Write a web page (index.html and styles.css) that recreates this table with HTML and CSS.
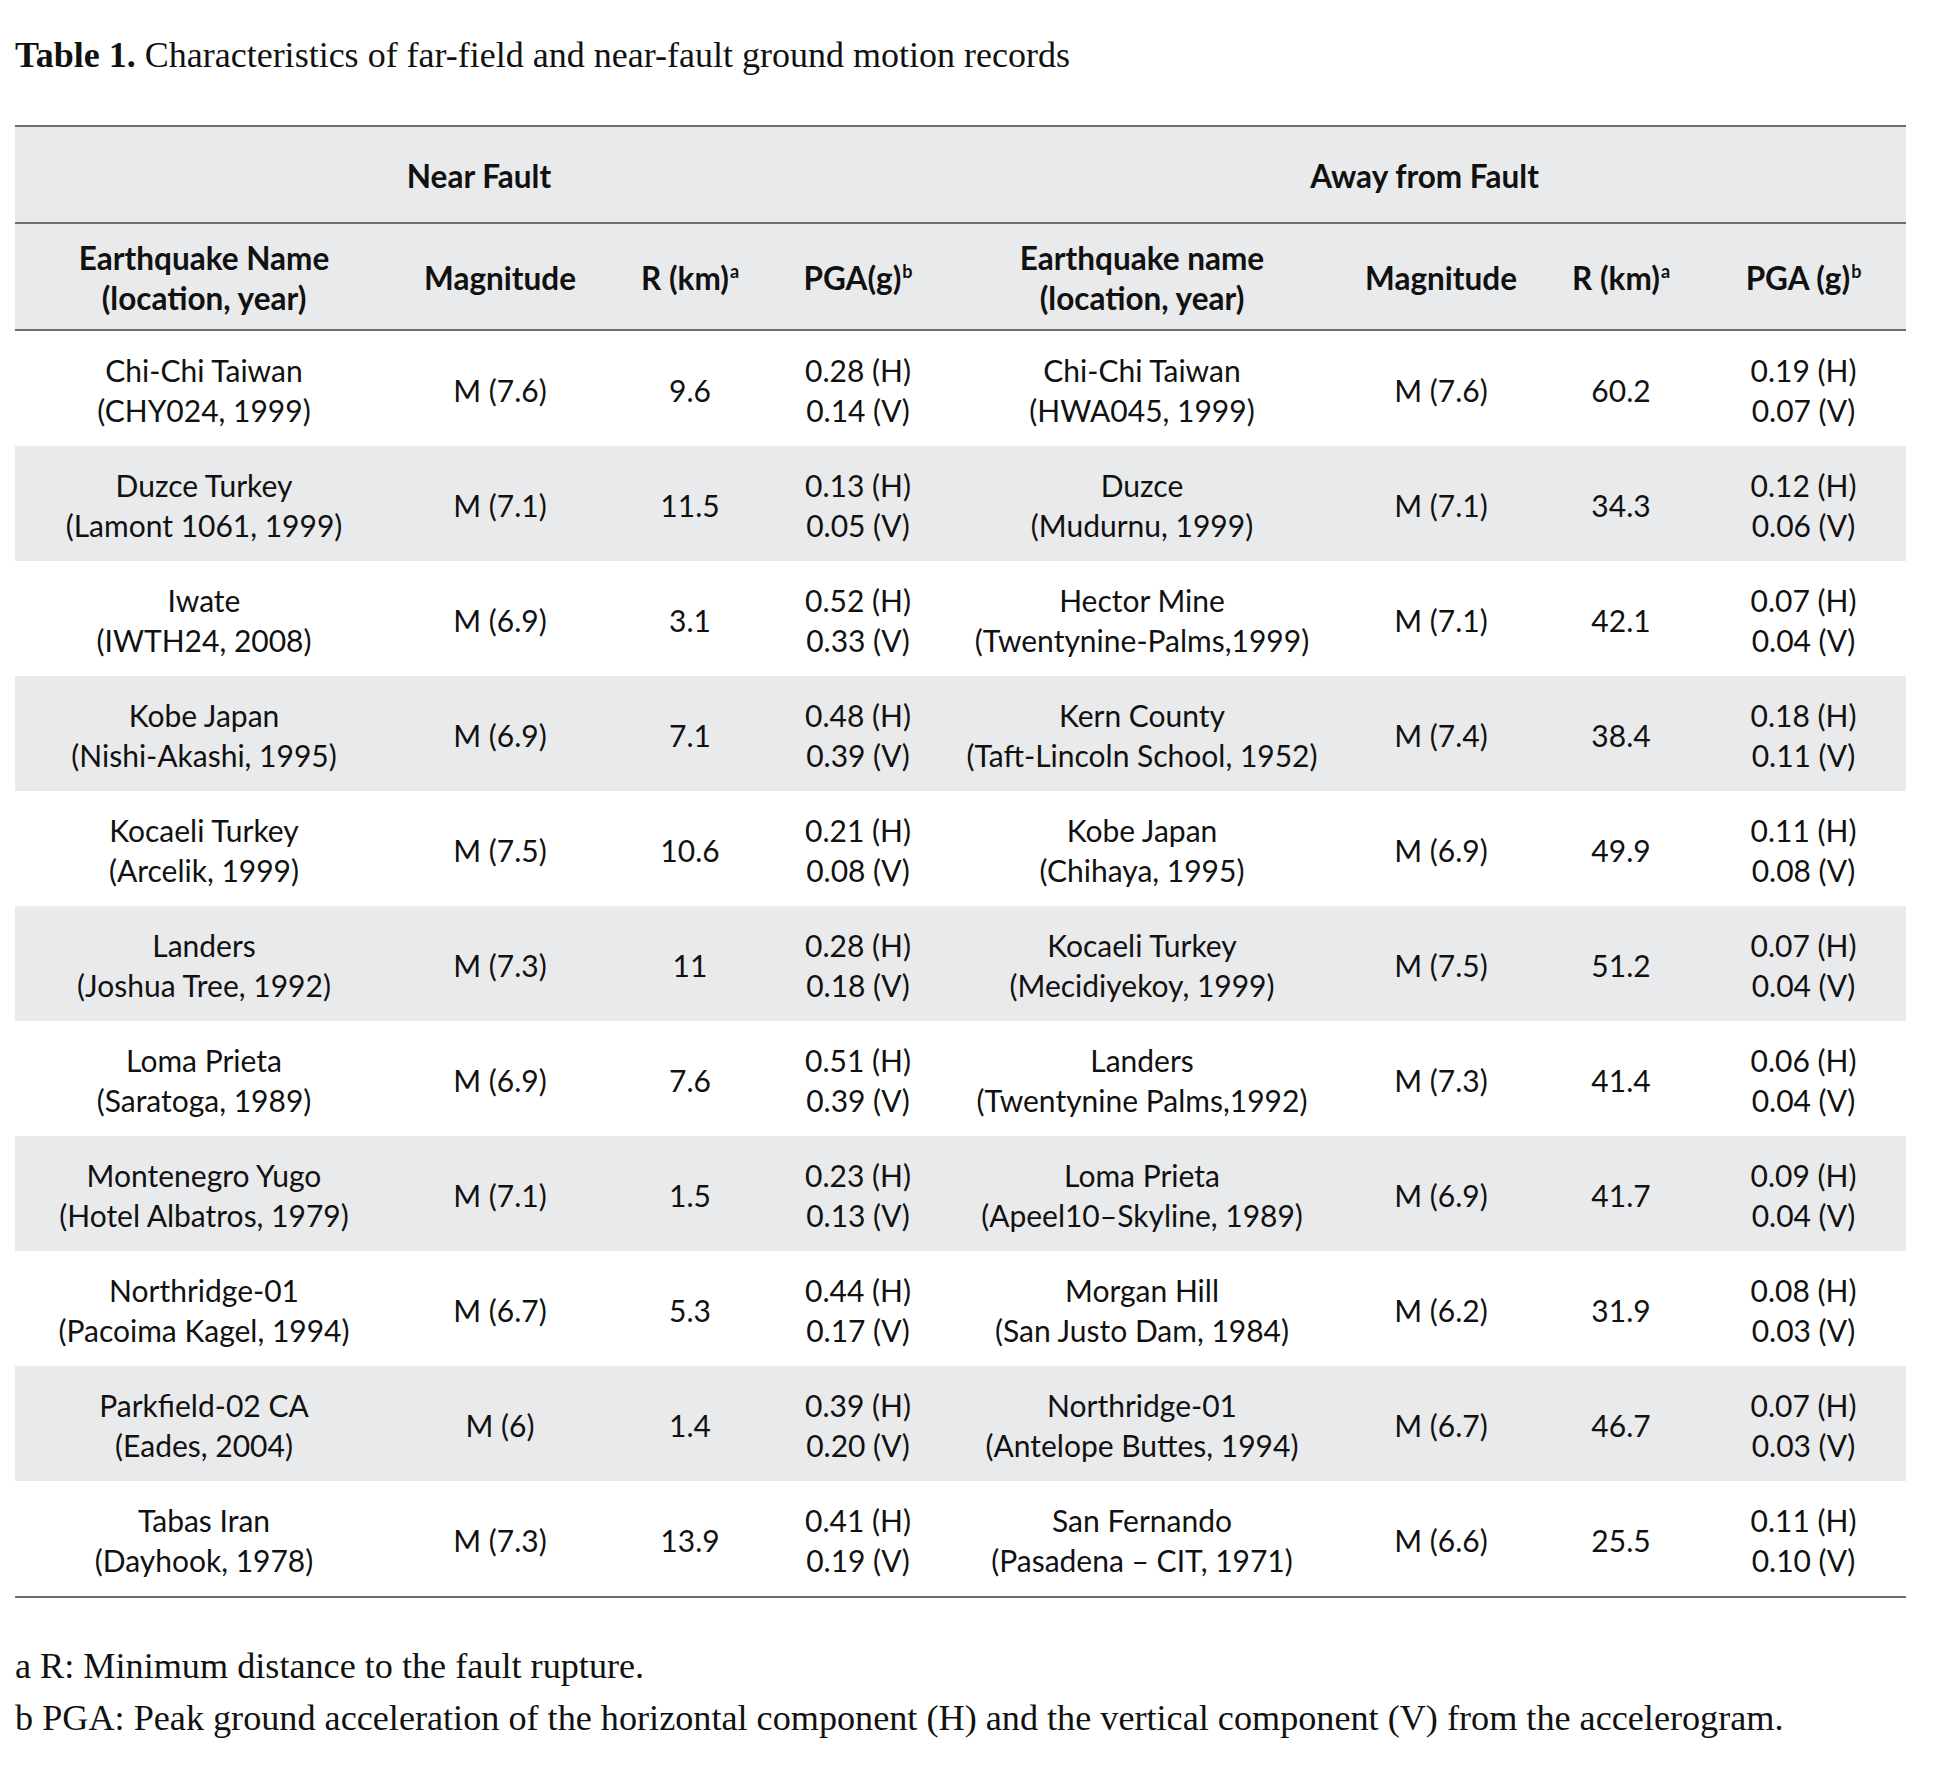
FILE: index.html
```html
<!DOCTYPE html>
<html lang="en">
<head>
<meta charset="utf-8">
<title>Table 1</title>
<link rel="stylesheet" href="styles.css">
</head>
<body>
<div class="page">
  <p class="caption"><b>Table 1.</b> Characteristics of far-field and near-fault ground motion records</p>
  <div class="table">
    <div class="row head1">
      <div class="cell span4 bold">Near Fault</div>
      <div class="cell span4 bold">Away from Fault</div>
    </div>
    <div class="row head2">
      <div class="cell bold">Earthquake Name<br>(location, year)</div>
      <div class="cell bold">Magnitude</div>
      <div class="cell bold">R (km)<sup>a</sup></div>
      <div class="cell bold">PGA(g)<sup>b</sup></div>
      <div class="cell bold">Earthquake name<br>(location, year)</div>
      <div class="cell bold">Magnitude</div>
      <div class="cell bold">R (km)<sup>a</sup></div>
      <div class="cell bold">PGA (g)<sup>b</sup></div>
    </div>

    <div class="row">
      <div class="cell">Chi-Chi Taiwan<br>(CHY024, 1999)</div>
      <div class="cell">M (7.6)</div>
      <div class="cell">9.6</div>
      <div class="cell">0.28 (H)<br>0.14 (V)</div>
      <div class="cell">Chi-Chi Taiwan<br>(HWA045, 1999)</div>
      <div class="cell">M (7.6)</div>
      <div class="cell">60.2</div>
      <div class="cell">0.19 (H)<br>0.07 (V)</div>
    </div>
    <div class="row shade">
      <div class="cell">Duzce Turkey<br>(Lamont 1061, 1999)</div>
      <div class="cell">M (7.1)</div>
      <div class="cell">11.5</div>
      <div class="cell">0.13 (H)<br>0.05 (V)</div>
      <div class="cell">Duzce<br>(Mudurnu, 1999)</div>
      <div class="cell">M (7.1)</div>
      <div class="cell">34.3</div>
      <div class="cell">0.12 (H)<br>0.06 (V)</div>
    </div>
    <div class="row">
      <div class="cell">Iwate<br>(IWTH24, 2008)</div>
      <div class="cell">M (6.9)</div>
      <div class="cell">3.1</div>
      <div class="cell">0.52 (H)<br>0.33 (V)</div>
      <div class="cell">Hector Mine<br>(Twentynine-Palms,1999)</div>
      <div class="cell">M (7.1)</div>
      <div class="cell">42.1</div>
      <div class="cell">0.07 (H)<br>0.04 (V)</div>
    </div>
    <div class="row shade">
      <div class="cell">Kobe Japan<br>(Nishi-Akashi, 1995)</div>
      <div class="cell">M (6.9)</div>
      <div class="cell">7.1</div>
      <div class="cell">0.48 (H)<br>0.39 (V)</div>
      <div class="cell">Kern County<br>(Taft-Lincoln School, 1952)</div>
      <div class="cell">M (7.4)</div>
      <div class="cell">38.4</div>
      <div class="cell">0.18 (H)<br>0.11 (V)</div>
    </div>
    <div class="row">
      <div class="cell">Kocaeli Turkey<br>(Arcelik, 1999)</div>
      <div class="cell">M (7.5)</div>
      <div class="cell">10.6</div>
      <div class="cell">0.21 (H)<br>0.08 (V)</div>
      <div class="cell">Kobe Japan<br>(Chihaya, 1995)</div>
      <div class="cell">M (6.9)</div>
      <div class="cell">49.9</div>
      <div class="cell">0.11 (H)<br>0.08 (V)</div>
    </div>
    <div class="row shade">
      <div class="cell">Landers<br>(Joshua Tree, 1992)</div>
      <div class="cell">M (7.3)</div>
      <div class="cell">11</div>
      <div class="cell">0.28 (H)<br>0.18 (V)</div>
      <div class="cell">Kocaeli Turkey<br>(Mecidiyekoy, 1999)</div>
      <div class="cell">M (7.5)</div>
      <div class="cell">51.2</div>
      <div class="cell">0.07 (H)<br>0.04 (V)</div>
    </div>
    <div class="row">
      <div class="cell">Loma Prieta<br>(Saratoga, 1989)</div>
      <div class="cell">M (6.9)</div>
      <div class="cell">7.6</div>
      <div class="cell">0.51 (H)<br>0.39 (V)</div>
      <div class="cell">Landers<br>(Twentynine Palms,1992)</div>
      <div class="cell">M (7.3)</div>
      <div class="cell">41.4</div>
      <div class="cell">0.06 (H)<br>0.04 (V)</div>
    </div>
    <div class="row shade">
      <div class="cell">Montenegro Yugo<br>(Hotel Albatros, 1979)</div>
      <div class="cell">M (7.1)</div>
      <div class="cell">1.5</div>
      <div class="cell">0.23 (H)<br>0.13 (V)</div>
      <div class="cell">Loma Prieta<br>(Apeel10–Skyline, 1989)</div>
      <div class="cell">M (6.9)</div>
      <div class="cell">41.7</div>
      <div class="cell">0.09 (H)<br>0.04 (V)</div>
    </div>
    <div class="row">
      <div class="cell">Northridge-01<br>(Pacoima Kagel, 1994)</div>
      <div class="cell">M (6.7)</div>
      <div class="cell">5.3</div>
      <div class="cell">0.44 (H)<br>0.17 (V)</div>
      <div class="cell">Morgan Hill<br>(San Justo Dam, 1984)</div>
      <div class="cell">M (6.2)</div>
      <div class="cell">31.9</div>
      <div class="cell">0.08 (H)<br>0.03 (V)</div>
    </div>
    <div class="row shade">
      <div class="cell">Parkfield-02 CA<br>(Eades, 2004)</div>
      <div class="cell">M (6)</div>
      <div class="cell">1.4</div>
      <div class="cell">0.39 (H)<br>0.20 (V)</div>
      <div class="cell">Northridge-01<br>(Antelope Buttes, 1994)</div>
      <div class="cell">M (6.7)</div>
      <div class="cell">46.7</div>
      <div class="cell">0.07 (H)<br>0.03 (V)</div>
    </div>
    <div class="row">
      <div class="cell">Tabas Iran<br>(Dayhook, 1978)</div>
      <div class="cell">M (7.3)</div>
      <div class="cell">13.9</div>
      <div class="cell">0.41 (H)<br>0.19 (V)</div>
      <div class="cell">San Fernando<br>(Pasadena – CIT, 1971)</div>
      <div class="cell">M (6.6)</div>
      <div class="cell">25.5</div>
      <div class="cell">0.11 (H)<br>0.10 (V)</div>
    </div>
  </div>
  <div class="notes">
    <p>a R: Minimum distance to the fault rupture.</p>
    <p>b PGA: Peak ground acceleration of the horizontal component (H) and the vertical component (V) from the accelerogram.</p>
  </div>
</div>
</body>
</html>
```
FILE: styles.css
```css
* { box-sizing: border-box; }
html, body { margin: 0; padding: 0; background: #ffffff; }
.page {
  padding: 35px 15px 0 15px;
  color: #111111;
}
.caption {
  margin: 0;
  font-family: "Liberation Serif", "Times New Roman", serif;
  font-size: 36px;
  line-height: 40px;
  color: #111111;
}
.caption b { font-weight: 700; }
.table {
  margin-top: 50px;
  width: 1891px;
  border-top: 2px solid #6e6e6e;
  border-bottom: 2px solid #6e6e6e;
  font-family: Lato, "Open Sans", sans-serif;
  font-size: 30px;
  line-height: 40px;
  color: #111111;
}
.row {
  display: grid;
  grid-template-columns: 378px 214px 166px 170px 398px 200px 160px 205px;
  height: 115px;
  align-items: center;
  padding-top: 2px;
}
.row.shade { background: #e9eaec; }
.head1 {
  height: 97px;
  background: #e9eaec;
  border-bottom: 2px solid #6e6e6e;
}
.head2 {
  height: 107px;
  background: #e9eaec;
  border-bottom: 2px solid #6e6e6e;
}
.cell {
  text-align: center;
  white-space: nowrap;
}
.span4 { grid-column: span 4; }
.bold { font-weight: 700; font-size: 31.5px; }
sup {
  font-size: 18px;
  line-height: 0;
  vertical-align: 12px;
  margin-left: 1px;
}
.notes {
  margin-top: 42px;
  font-family: "Liberation Serif", "Times New Roman", serif;
  font-size: 36.2px;
  line-height: 52px;
  color: #111111;
}
.notes p { margin: 0; }
```
